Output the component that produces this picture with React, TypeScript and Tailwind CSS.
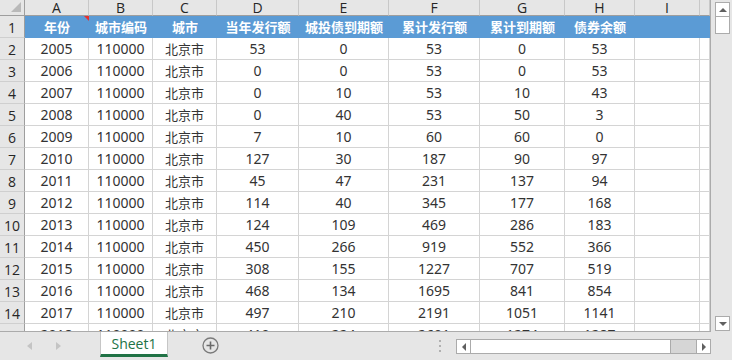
import React from "react";

const cols = [
  { letter: "A", w: "w-[64px]", head: "年份" },
  { letter: "B", w: "w-[64px]", head: "城市编码" },
  { letter: "C", w: "w-[64px]", head: "城市" },
  { letter: "D", w: "w-[82px]", head: "当年发行额" },
  { letter: "E", w: "w-[90px]", head: "城投债到期额" },
  { letter: "F", w: "w-[91px]", head: "累计发行额" },
  { letter: "G", w: "w-[85px]", head: "累计到期额" },
  { letter: "H", w: "w-[70px]", head: "债券余额" },
  { letter: "I", w: "w-[65px]", head: "" },
  { letter: "", w: "w-[10px]", head: "" },
];

const data: (string | number)[][] = [
  [2005, 53, 0, 53, 0, 53],
  [2006, 0, 0, 53, 0, 53],
  [2007, 0, 10, 53, 10, 43],
  [2008, 0, 40, 53, 50, 3],
  [2009, 7, 10, 60, 60, 0],
  [2010, 127, 30, 187, 90, 97],
  [2011, 45, 47, 231, 137, 94],
  [2012, 114, 40, 345, 177, 168],
  [2013, 124, 109, 469, 286, 183],
  [2014, 450, 266, 919, 552, 366],
  [2015, 308, 155, 1227, 707, 519],
  [2016, 468, 134, 1695, 841, 854],
  [2017, 497, 210, 2191, 1051, 1141],
  [2018, 410, 224, 2601, 1274, 1287],
];

const hdrFont = { fontFamily: '"Open Sans", "Noto Sans", sans-serif' };
const numFont = { fontFamily: '"Noto Sans", "Noto Sans CJK SC", sans-serif' };
const cjkFont = { fontFamily: '"Noto Sans CJK SC", sans-serif' };

function DataRow({ n, r }: { n: number; r: (string | number)[] }) {
  const vals: (string | number)[] = [r[0], 110000, "北京市", r[1], r[2], r[3], r[4], r[5], "", ""];
  return (
    <div className="flex h-[22px] shrink-0">
      <div
        className="w-[25px] shrink-0 bg-[#e6e6e6] border-r border-r-[#9e9e9e] border-b border-b-[#cfcfcf] flex items-center justify-center text-[14px] text-[#262626]"
        style={hdrFont}
      >
        <span className="mt-[2px]">{n}</span>
      </div>
      {cols.map((c, i) => (
        <div
          key={i}
          className={`${c.w} shrink-0 bg-white border-r border-b border-[#d4d4d4] flex items-center justify-center text-[#333333] overflow-hidden`}
        >
          {i === 2 ? (
            <span className="text-[13px]" style={cjkFont}>
              {vals[i]}
            </span>
          ) : (
            <span className="text-[14px]" style={numFont}>
              {vals[i]}
            </span>
          )}
        </div>
      ))}
    </div>
  );
}

export default function App() {
  return (
    <div className="w-[732px] h-[360px] bg-[#e6e6e6] flex flex-col overflow-hidden select-none">
      <div className="flex h-[332px] shrink-0">
        {/* grid */}
        <div className="w-[711px] shrink-0 flex flex-col overflow-hidden border-r border-[#ababab] border-b border-b-[#ababab]">
          {/* column headers */}
          <div className="flex h-[16px] shrink-0">
            <div className="relative w-[25px] shrink-0 bg-[#e6e6e6] border-r border-b border-[#9e9e9e]">
              <div className="absolute right-[3px] bottom-[3px] w-0 h-0 border-l-[10px] border-l-transparent border-b-[10px] border-b-[#b9b9b9]" />
            </div>
            {cols.map((c, i) => (
              <div
                key={i}
                className={`${c.w} shrink-0 bg-[#e6e6e6] border-r border-r-[#c8c8c8] border-b border-b-[#9e9e9e] flex items-center justify-center text-[14px] text-[#262626] leading-[15px]`}
                style={hdrFont}
              >
                {c.letter}
              </div>
            ))}
          </div>
          {/* row 1 */}
          <div className="flex h-[22px] shrink-0">
            <div
              className="w-[25px] shrink-0 bg-[#e6e6e6] border-r border-r-[#9e9e9e] border-b border-b-[#cfcfcf] flex items-center justify-center text-[14px] text-[#262626]"
              style={hdrFont}
            >
              <span className="mt-[2px]">1</span>
            </div>
            {cols.map((c, i) => (
              <div
                key={i}
                className={`relative ${c.w} shrink-0 bg-[#5b9bd5] flex items-center justify-center text-white font-bold text-[13px] overflow-hidden`}
                style={cjkFont}
              >
                {c.head}
                {i === 0 && (
                  <div className="absolute right-0 top-0 w-0 h-0 border-l-[5px] border-l-transparent border-t-[5px] border-t-[#e8312f]" />
                )}
              </div>
            ))}
          </div>
          {data.map((r, idx) => (
            <DataRow key={idx} n={idx + 2} r={r} />
          ))}
        </div>
        {/* vertical scrollbar */}
        <div className="flex-1 flex flex-col items-center pt-[2px] pb-[1px] pl-[2px]">
          <div className="w-[15px] h-[15px] bg-white border border-[#ababab] flex items-center justify-center">
            <div className="w-0 h-0 border-l-[4px] border-r-[4px] border-l-transparent border-r-transparent border-b-[4px] border-b-[#606060]" />
          </div>
          <div className="w-[15px] h-[18px] bg-white border border-[#ababab] -mt-[1px]" />
          <div className="flex-1" />
          <div className="w-[15px] h-[15px] bg-white border border-[#ababab] flex items-center justify-center">
            <div className="w-0 h-0 border-l-[4px] border-r-[4px] border-l-transparent border-r-transparent border-t-[4px] border-t-[#606060]" />
          </div>
        </div>
      </div>
      {/* bottom bar */}
      <div className="flex-1 flex items-start">
        <div className="flex items-center h-[28px] pl-[27px] w-[100px] shrink-0">
          <div className="w-0 h-0 border-t-[4px] border-b-[4px] border-t-transparent border-b-transparent border-r-[5px] border-r-[#c4c4c4]" />
          <div className="w-0 h-0 border-t-[4px] border-b-[4px] border-t-transparent border-b-transparent border-l-[5px] border-l-[#c4c4c4] ml-[24px]" />
        </div>
        <div
          className="w-[68px] h-[25px] bg-white border-x border-[#c6c6c6] border-b-[3px] border-b-[#217346] flex items-center justify-center text-[14px] text-[#217346] shrink-0"
          style={hdrFont}
        >
          Sheet1
        </div>
        <div className="w-[51px] shrink-0 h-[28px] flex items-center justify-end pb-[1px]">
          <svg width="17" height="17" viewBox="0 0 17 17">
            <circle cx="8.5" cy="8.5" r="7.5" fill="none" stroke="#7a7a7a" strokeWidth="1.3" />
            <path d="M8.5 4.5v8M4.5 8.5h8" stroke="#6a6a6a" strokeWidth="1.6" />
          </svg>
        </div>
        <div className="w-[237px] shrink-0 h-[28px] flex items-center justify-end pr-[15px]">
          <div className="flex flex-col gap-[3px]">
            <div className="w-[2px] h-[2px] bg-[#b0b0b0]" />
            <div className="w-[2px] h-[2px] bg-[#b0b0b0]" />
            <div className="w-[2px] h-[2px] bg-[#b0b0b0]" />
          </div>
        </div>
        <div className="flex mt-[7px] h-[15px] w-[255px] shrink-0">
          <div className="w-[15px] h-[15px] bg-white border border-[#ababab] flex items-center justify-center shrink-0">
            <div className="w-0 h-0 border-t-[4px] border-b-[4px] border-t-transparent border-b-transparent border-r-[4px] border-r-[#606060]" />
          </div>
          <div className="w-[200px] h-[15px] bg-white border-y border-r border-[#ababab] shrink-0" />
          <div className="flex-1 bg-[#d6d6d6] border-y border-[#ababab]" />
          <div className="w-[15px] h-[15px] bg-white border border-[#ababab] flex items-center justify-center shrink-0">
            <div className="w-0 h-0 border-t-[4px] border-b-[4px] border-t-transparent border-b-transparent border-l-[4px] border-l-[#606060]" />
          </div>
        </div>
      </div>
    </div>
  );
}
